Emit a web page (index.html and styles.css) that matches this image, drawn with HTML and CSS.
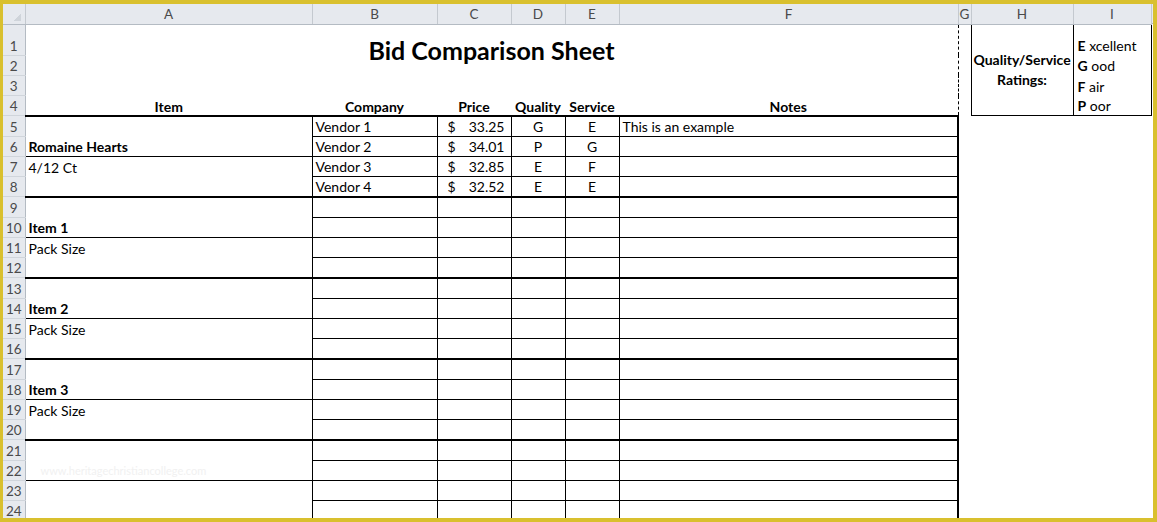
FILE: index.html
```html
<!DOCTYPE html>
<html>
<head>
<meta charset="utf-8">
<title>Bid Comparison Sheet</title>
<link rel="stylesheet" href="styles.css">
</head>
<body>
<div class="frame">
<div class="sheet">
<table class="grid">
<colgroup>
<col class="c-rh"><col class="c-a"><col class="c-b"><col class="c-c"><col class="c-d"><col class="c-e"><col class="c-f"><col class="c-g"><col class="c-h"><col class="c-i">
</colgroup>
<thead>
<tr class="hdr"><th class="corner"></th><th>A</th><th>B</th><th>C</th><th>D</th><th>E</th><th>F</th><th>G</th><th>H</th><th>I</th></tr>
</thead>
<tbody class="top">
<tr class="r1"><th class="rh">1</th><td class="title pb" colspan="6" rowspan="3"><div class="title-text">Bid Comparison Sheet</div></td><td></td><td class="h" rowspan="4">Quality/Service<br>Ratings:</td><td class="i"><b>E</b> xcellent</td></tr>
<tr class="rw"><th class="rh">2</th><td></td><td class="i"><b>G</b> ood</td></tr>
<tr class="rw"><th class="rh">3</th><td></td><td class="i"><b>F</b> air</td></tr>
<tr class="rw hd"><th class="rh">4</th><td class="a">Item</td><td class="b">Company</td><td class="c">Price</td><td class="d">Quality</td><td class="e">Service</td><td class="f pb">Notes</td><td></td><td class="i last"><b>P</b> oor</td></tr>
</tbody>
<tbody class="data">
<tr class="rw gs"><th class="rh">5</th><td class="a"></td><td class="b">Vendor 1</td><td class="c"><div class="acct"><span>$</span><span>33.25</span></div></td><td class="d">G</td><td class="e">E</td><td class="f">This is an example</td></tr>
<tr class="rw"><th class="rh">6</th><td class="a split"><b>Romaine Hearts</b></td><td class="b">Vendor 2</td><td class="c"><div class="acct"><span>$</span><span>34.01</span></div></td><td class="d">P</td><td class="e">G</td><td class="f"></td></tr>
<tr class="rw"><th class="rh">7</th><td class="a">4/12 Ct</td><td class="b">Vendor 3</td><td class="c"><div class="acct"><span>$</span><span>32.85</span></div></td><td class="d">E</td><td class="e">F</td><td class="f"></td></tr>
<tr class="rw"><th class="rh">8</th><td class="a"></td><td class="b">Vendor 4</td><td class="c"><div class="acct"><span>$</span><span>32.52</span></div></td><td class="d">E</td><td class="e">E</td><td class="f"></td></tr>

<tr class="rw gs"><th class="rh">9</th><td class="a"></td><td class="b"></td><td class="c"></td><td class="d"></td><td class="e"></td><td class="f"></td></tr>
<tr class="rw"><th class="rh">10</th><td class="a split"><b>Item 1</b></td><td class="b"></td><td class="c"></td><td class="d"></td><td class="e"></td><td class="f"></td></tr>
<tr class="rw"><th class="rh">11</th><td class="a">Pack Size</td><td class="b"></td><td class="c"></td><td class="d"></td><td class="e"></td><td class="f"></td></tr>
<tr class="rw"><th class="rh">12</th><td class="a"></td><td class="b"></td><td class="c"></td><td class="d"></td><td class="e"></td><td class="f"></td></tr>

<tr class="rw gs"><th class="rh">13</th><td class="a"></td><td class="b"></td><td class="c"></td><td class="d"></td><td class="e"></td><td class="f"></td></tr>
<tr class="rw"><th class="rh">14</th><td class="a split"><b>Item 2</b></td><td class="b"></td><td class="c"></td><td class="d"></td><td class="e"></td><td class="f"></td></tr>
<tr class="rw"><th class="rh">15</th><td class="a">Pack Size</td><td class="b"></td><td class="c"></td><td class="d"></td><td class="e"></td><td class="f"></td></tr>
<tr class="rw"><th class="rh">16</th><td class="a"></td><td class="b"></td><td class="c"></td><td class="d"></td><td class="e"></td><td class="f"></td></tr>

<tr class="rw gs"><th class="rh">17</th><td class="a"></td><td class="b"></td><td class="c"></td><td class="d"></td><td class="e"></td><td class="f"></td></tr>
<tr class="rw"><th class="rh">18</th><td class="a split"><b>Item 3</b></td><td class="b"></td><td class="c"></td><td class="d"></td><td class="e"></td><td class="f"></td></tr>
<tr class="rw"><th class="rh">19</th><td class="a">Pack Size</td><td class="b"></td><td class="c"></td><td class="d"></td><td class="e"></td><td class="f"></td></tr>
<tr class="rw"><th class="rh">20</th><td class="a"></td><td class="b"></td><td class="c"></td><td class="d"></td><td class="e"></td><td class="f"></td></tr>

<tr class="rw gs"><th class="rh">21</th><td class="a"></td><td class="b"></td><td class="c"></td><td class="d"></td><td class="e"></td><td class="f"></td></tr>
<tr class="rw"><th class="rh">22</th><td class="a split"><span class="watermark">www.heritagechristiancollege.com</span></td><td class="b"></td><td class="c"></td><td class="d"></td><td class="e"></td><td class="f"></td></tr>
<tr class="rw"><th class="rh">23</th><td class="a"></td><td class="b"></td><td class="c"></td><td class="d"></td><td class="e"></td><td class="f"></td></tr>
<tr class="rw"><th class="rh">24</th><td class="a"></td><td class="b"></td><td class="c"></td><td class="d"></td><td class="e"></td><td class="f"></td></tr>
</tbody>
</table>
</div>
</div>
</body>
</html>
```

FILE: styles.css
```css
html, body {
  margin: 0;
  padding: 0;
}

body {
  width: 1157px;
  height: 522px;
  overflow: hidden;
  background: #d9c02e;
}

.frame {
  box-sizing: border-box;
  height: 522px;
  padding: 4px 4px 4px 3px;
}

.sheet {
  height: 514px;
  overflow: hidden;
  background: linear-gradient(#e6e9ee 0 19px, #b4bbc3 19px 20px, #ffffff 20px);
}

.grid {
  border-collapse: collapse;
  table-layout: fixed;
  width: 1148px;
  font-family: Lato, "Liberation Sans", sans-serif;
  font-size: 14px;
  color: #000;
}

.c-rh { width: 22px; }
.c-a { width: 287px; }
.c-b { width: 125px; }
.c-c { width: 74px; }
.c-d { width: 54px; }
.c-e { width: 54px; }
.c-f { width: 339px; }
.c-g { width: 13px; }
.c-h { width: 102px; }
.c-i { width: 78px; }

.grid td {
  padding: 0 3px 1px;
  line-height: 17px;
  vertical-align: bottom;
  white-space: nowrap;
  overflow: visible;
}

/* column header row */
.hdr { height: 20px; }
.hdr th {
  padding: 0;
  font-weight: normal;
  font-size: 13.5px;
  color: #4a4a4a;
  background: #e6e9ee;
  border-right: 1px solid #c4c9cf;
  border-bottom: 1px solid #b4bbc3;
  text-align: center;
  vertical-align: middle;
}

.hdr th.corner {
  background: linear-gradient(135deg, #e6e9ee 0 62%, #cfd4da 62%);
  background-size: 10px 10px;
  background-position: 8px 7px;
  background-repeat: no-repeat;
  background-color: #e6e9ee;
}

/* row header column */
.rh {
  padding: 0;
  font-weight: normal;
  font-size: 13.5px;
  line-height: 17px;
  color: #4a4a4a;
  background: #e6e9ee;
  border-right: 1px solid #b4bbc3;
  border-bottom: 1px solid #d0d5db;
  text-align: center;
  vertical-align: bottom;
}

.r1 { height: 31px; }
.rw { height: 20.25px; }

/* title */
.grid td.title {
  vertical-align: top;
  text-align: center;
  padding: 0;
}

.title-text {
  padding-top: 10px;
  font-size: 25px;
  line-height: 30px;
  font-weight: 700;
}

.pb { border-right: 1px dashed #000; }

/* row 4 headings */
.hd td.a, .hd td.b, .hd td.c, .hd td.d, .hd td.e, .hd td.f {
  font-weight: 700;
  text-align: center;
  padding-bottom: 0;
}

/* ratings box */
.grid td.h {
  border: 1px solid #000;
  border-top: none;
  text-align: center;
  vertical-align: middle;
  font-weight: 700;
  line-height: 20px;
  padding: 0 2px;
}

.grid td.i {
  border-right: 1px solid #000;
  padding-left: 4px;
}

.grid td.i.last { border-bottom: 1px solid #000; }

/* data area */
.data td.b, .data td.c, .data td.d, .data td.e {
  border: 1px solid #000;
}

.data td.a { border-right: 1px solid #000; }

.data td.f {
  border-top: 1px solid #000;
  border-bottom: 1px solid #000;
  border-right: 2px solid #000;
}

.data td.d, .data td.e { text-align: center; }

.data tr.gs td { border-top: 2px solid #000; }

.data td.a.split { border-bottom: 1px solid #000; }

.acct {
  display: flex;
  justify-content: space-between;
  padding: 0 3px 0 7px;
}

.watermark {
  padding-left: 12px;
  color: #f1f1f1;
  font-size: 11px;
}
```
